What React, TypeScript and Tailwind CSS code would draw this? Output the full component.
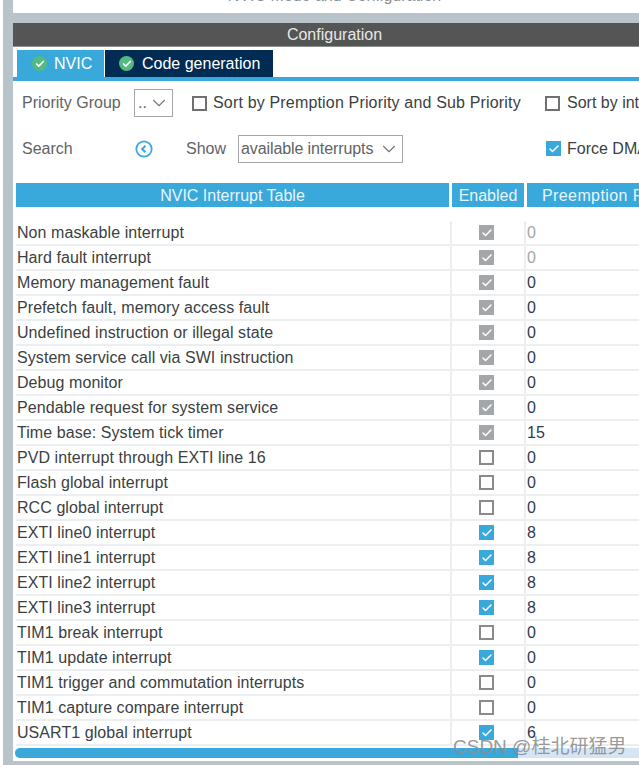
import { Check, ChevronDown } from "lucide-react";

const rows = [
  { name: "Non maskable interrupt", state: "locked", value: "0", muted: true },
  { name: "Hard fault interrupt", state: "locked", value: "0", muted: true },
  { name: "Memory management fault", state: "locked", value: "0" },
  { name: "Prefetch fault, memory access fault", state: "locked", value: "0" },
  { name: "Undefined instruction or illegal state", state: "locked", value: "0" },
  { name: "System service call via SWI instruction", state: "locked", value: "0" },
  { name: "Debug monitor", state: "locked", value: "0" },
  { name: "Pendable request for system service", state: "locked", value: "0" },
  { name: "Time base: System tick timer", state: "locked", value: "15" },
  { name: "PVD interrupt through EXTI line 16", state: "off", value: "0" },
  { name: "Flash global interrupt", state: "off", value: "0" },
  { name: "RCC global interrupt", state: "off", value: "0" },
  { name: "EXTI line0 interrupt", state: "on", value: "8" },
  { name: "EXTI line1 interrupt", state: "on", value: "8" },
  { name: "EXTI line2 interrupt", state: "on", value: "8" },
  { name: "EXTI line3 interrupt", state: "on", value: "8" },
  { name: "TIM1 break interrupt", state: "off", value: "0" },
  { name: "TIM1 update interrupt", state: "on", value: "0" },
  { name: "TIM1 trigger and commutation interrupts", state: "off", value: "0" },
  { name: "TIM1 capture compare interrupt", state: "off", value: "0" },
  { name: "USART1 global interrupt", state: "on", value: "6" },
];

function Box({ state }: { state: string }) {
  if (state === "off") {
    return <span className="block w-[15px] h-[15px] shrink-0 border-2 border-[#8a8a8a] bg-white" />;
  }
  return (
    <span
      className={`flex items-center justify-center w-[15px] h-[15px] shrink-0 ${
        state === "on" ? "bg-[#39a9dc]" : "bg-[#a3a7aa]"
      }`}
    >
      <Check className="w-[12px] h-[12px] text-white" strokeWidth={3} />
    </span>
  );
}

function TabCheck() {
  return (
    <span className="flex items-center justify-center w-[15px] h-[15px] rounded-full bg-[#56b981]">
      <Check className="w-[10px] h-[10px] text-white" strokeWidth={4} />
    </span>
  );
}

export default function App() {
  return (
    <div className="relative w-[639px] h-[765px] overflow-hidden flex bg-white text-[#3b3f42] text-[16px] font-['Liberation_Sans',Arial,sans-serif]">
      {/* left gutter */}
      <div className="w-[3px] shrink-0 bg-white" />
      <div className="w-[10px] shrink-0 bg-[#b8c4ca]" />

      <main className="flex-1 min-w-0 flex flex-col">
        <div className="h-[13px] shrink-0 overflow-hidden flex justify-center pl-[17px]">
          <span className="-mt-[13px] h-[18px] leading-[18px] text-[#8b8f92]">
            NVIC Mode and Configuration
          </span>
        </div>
        <div className="h-[10px] shrink-0 bg-[#b8c4ca]" />

        <div className="h-[24px] shrink-0 bg-[#545554] border-b border-[#8b8f8e] pl-[17px] text-center text-[#e8e8e8] leading-[23px]">
          Configuration
        </div>

        {/* tabs */}
        <div className="pt-[3px] pl-[4px] flex h-[30px] shrink-0">
          <div className="w-[87px] h-[27px] bg-[#39a9dc] flex items-center gap-[7px] pl-[15px] text-white mr-px">
            <TabCheck />
            <span>NVIC</span>
          </div>
          <div className="w-[168px] h-[27px] bg-[#002b52] flex items-center gap-[8px] pl-[14px] text-white">
            <TabCheck />
            <span>Code generation</span>
          </div>
        </div>
        <div className="h-[4px] shrink-0 bg-[#39a9dc]" />

        {/* controls */}
        <div className="h-[44px] shrink-0 flex items-center pl-[9px] whitespace-nowrap">
          <span className="w-[112px] shrink-0 text-[#5f6366]">Priority Group</span>
          <span className="w-[39px] h-[28px] shrink-0 border border-[#a3a7aa] flex items-center justify-between pl-[3px] pr-[2px] text-[#5f6366]">
            ..
            <ChevronDown className="w-[22px] h-[22px] text-[#777]" strokeWidth={1.2} />
          </span>
          <span className="ml-[19px] mr-[6px] w-[15px] h-[15px] shrink-0 border-2 border-[#707070]" />
          <span className="w-[332px] shrink-0 tracking-[0.17px]">Sort by Premption Priority and Sub Priority</span>
          <span className="mr-[7px] w-[15px] h-[15px] shrink-0 border-2 border-[#707070]" />
          <span>Sort by interrupt</span>
        </div>
        <div className="h-[47px] shrink-0 flex items-center pl-[9px] whitespace-nowrap">
          <span className="w-[113px] shrink-0 text-[#5f6366]">Search</span>
          <svg viewBox="0 0 18 18" className="w-[18px] h-[18px] shrink-0" fill="none" stroke="#39a9dc">
            <circle cx="9" cy="9" r="7.7" strokeWidth="1.8" />
            <path d="M10.5 5.8 7.2 9l3.3 3.2" strokeWidth="2" />
          </svg>
          <span className="ml-[33px] w-[52px] shrink-0 text-[#5f6366]">Show</span>
          <span className="w-[165px] h-[28px] shrink-0 border border-[#a3a7aa] flex items-center justify-between pl-[2px] pr-[2px] text-[#5f6366] tracking-[-0.1px]">
            available interrupts
            <ChevronDown className="w-[22px] h-[22px] text-[#777]" strokeWidth={1.2} />
          </span>
          <span className="ml-[143px] mr-[6px] flex items-center justify-center w-[15px] h-[15px] shrink-0 bg-[#39a9dc]">
            <Check className="w-[12px] h-[12px] text-white" strokeWidth={3} />
          </span>
          <span>Force DMA channels Interrupts</span>
        </div>

        {/* table */}
        <div className="pl-[3px] pt-[11px] flex flex-col flex-1 min-h-0">
          <div className="h-[24px] shrink-0 flex gap-[3px] text-[#e9f5fb] leading-[25px] whitespace-nowrap">
            <div className="w-[433px] shrink-0 bg-[#39a9dc] text-center">NVIC Interrupt Table</div>
            <div className="w-[72px] shrink-0 bg-[#39a9dc] text-center">Enabled</div>
            <div className="flex-1 bg-[#39a9dc] pl-[15px] tracking-[0.4px] overflow-hidden">Preemption Priority</div>
          </div>
          <div className="h-[14px] shrink-0" />

          <div className="h-[525px] shrink-0 overflow-hidden">
            {rows.map((row) => (
              <div key={row.name} className="h-[25px] flex border-b-2 border-[#eceff2] whitespace-nowrap">
                <div className="w-[434px] shrink-0 pl-px leading-[23px] tracking-[0.07px]">{row.name}</div>
                <div className="w-[76px] shrink-0 flex items-center justify-center border-x-2 border-[#eceff2] pr-[3px]">
                  <Box state={row.state} />
                </div>
                <div
                  className={`pl-px leading-[23px] ${row.muted ? "text-[#a3a7aa]" : "text-[#2f3a55]"}`}
                >
                  {row.value}
                </div>
              </div>
            ))}
          </div>

          {/* scrollbar */}
          <div className="h-[10px] shrink-0 mt-[2px] -ml-px bg-[#d4e6f5] rounded-l-full">
            <div className="w-[503px] h-full bg-[#39a9dc] rounded-l-full rounded-r-[6px]" />
          </div>
          <div className="flex-1" />
        </div>
        <div className="h-[4px] shrink-0 bg-[#b8c4ca]" />
      </main>

      {/* CSDN watermark */}
      <span className="absolute left-[453px] top-[735px] text-[19px] leading-[24px] text-[#8d8d8d]/90 whitespace-nowrap font-['Liberation_Sans','Noto_Sans_CJK_SC',sans-serif]">
        CSDN @桂北研猛男
      </span>
    </div>
  );
}
